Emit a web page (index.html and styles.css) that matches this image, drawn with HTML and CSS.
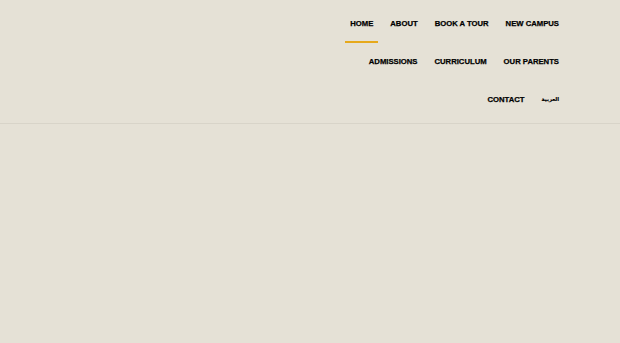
FILE: index.html
```html
<!DOCTYPE html>
<html>
<head>
    <title>School</title>
    <link rel="stylesheet" href="styles.css">
</head>
<body>
    <header class="site-header">
        <nav class="main-nav">
            <a href="#" class="nav-item active">HOME</a>
            <a href="#" class="nav-item">ABOUT</a>
            <a href="#" class="nav-item">BOOK A TOUR</a>
            <a href="#" class="nav-item">NEW CAMPUS</a>
            <a href="#" class="nav-item">ADMISSIONS</a>
            <a href="#" class="nav-item">CURRICULUM</a>
            <a href="#" class="nav-item">OUR PARENTS</a>
            <a href="#" class="nav-item">CONTACT</a>
            <a href="#" class="nav-item lang" lang="ar">العربية</a>
        </nav>
    </header>
    <main class="content"></main>
</body>
</html>
```

FILE: styles.css
```css
html, body {
    margin: 0;
    padding: 0;
    background: #e5e1d6;
}
body {
    font-family: "Liberation Sans", Arial, sans-serif;
    height: 343px;
    overflow: hidden;
}
.site-header {
    display: flex;
    justify-content: flex-end;
    padding: 5px 56px 4px 0;
    border-bottom: 1px solid #d8d4c9;
}
.main-nav {
    width: 230px;
    display: flex;
    flex-wrap: wrap;
    justify-content: flex-end;
    column-gap: 7px;
}
.nav-item {
    display: block;
    box-sizing: border-box;
    height: 38px;
    padding-top: 1px;
    line-height: 35px;
    padding-left: 5px;
    padding-right: 5px;
    border-bottom: 2px solid transparent;
    font-size: 7.7px;
    font-weight: bold;
    color: #000;
    -webkit-text-stroke: 0.25px #000;
    text-decoration: none;
    white-space: nowrap;
}
.nav-item.active {
    border-bottom-color: #e6a91c;
}
.nav-item.lang {
    font-family: "DejaVu Sans", sans-serif;
    font-size: 5.3px;
    -webkit-text-stroke: 0.15px #000;
}
```
